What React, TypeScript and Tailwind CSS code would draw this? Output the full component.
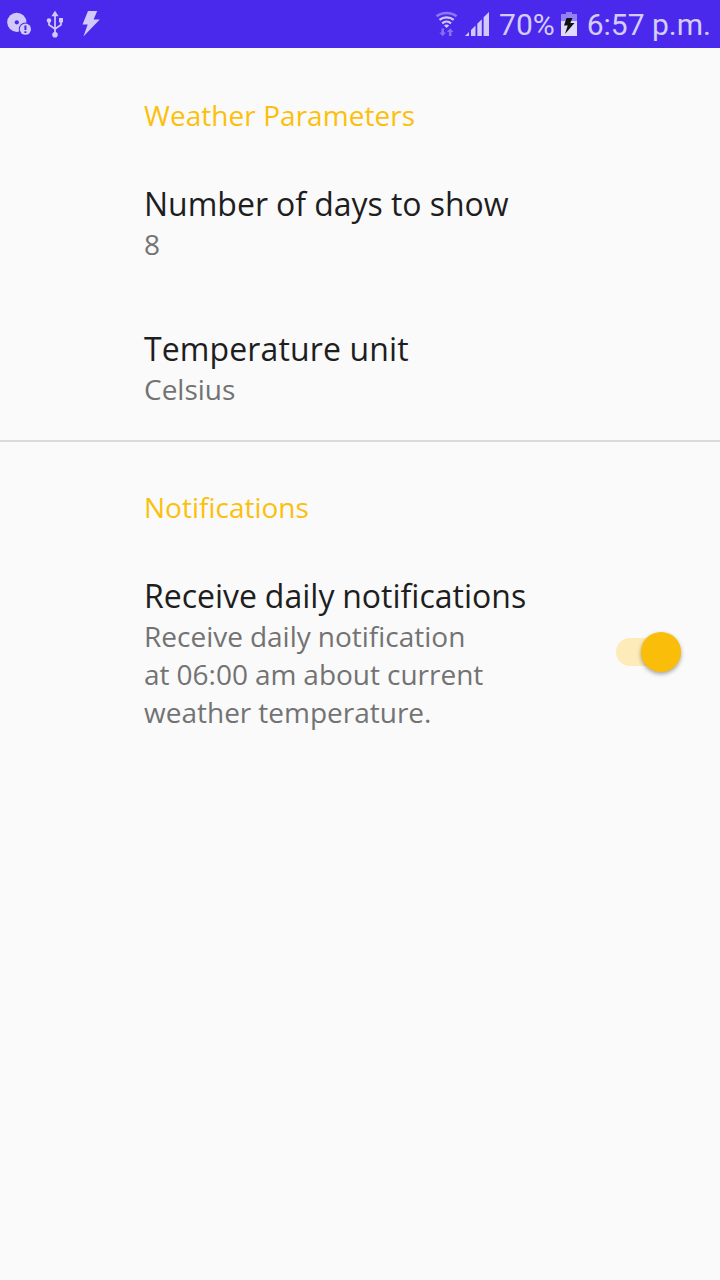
const H = "text-[28px] leading-[38px] text-[#fcc00c]";
const T = "text-[32px] leading-[44px] text-[#1e1e1f]";
const S = "text-[28px] leading-[38px] text-[#737373]";

function NotificationIcons() {
  return (
    <svg className="h-12 w-[110px]" viewBox="0 0 110 48" fill="#d2c9fb">
      <circle cx="16.8" cy="22.3" r="9.6" />
      <circle cx="16.8" cy="22.3" r="2.1" fill="#4a29ed" />
      <circle cx="25.4" cy="29.2" r="6.6" fill="#4a29ed" />
      <circle cx="25.4" cy="29.2" r="5.6" />
      <path d="M24.4 25.4h2v4.6h-2zM24.4 31.2h2v1.9h-2z" fill="#4a29ed" />
      <path d="M55 10.8l3.6 5.4h-7.2z" />
      <path d="M55 15v19M49 20.5v4.2l6 4.3M61 20.5v4.2l-6 4.3" fill="none" stroke="#d2c9fb" strokeWidth="1.7" />
      <circle cx="49" cy="20.5" r="2.3" />
      <path d="M59 18h4v4.4h-4z" />
      <circle cx="55" cy="34.8" r="2.8" />
      <path d="M88 11h9.2l-3.6 8.6h6.2L83.4 36.6l4.3-12.2h-5.2z" />
    </svg>
  );
}

function NetworkIcons() {
  return (
    <svg className="h-12 w-[60px]" viewBox="432 0 60 48" fill="none" stroke="#d2c9fb" strokeWidth="2.2">
      <path d="M436.6 16.3C442 11.9 451.2 11.9 456.6 16.3" strokeWidth="2.5" opacity=".5" />
      <path d="M439.5 19.9C443.4 16.6 449.8 16.6 453.7 19.9M442.2 23.4C444.8 21.1 448.4 21.1 451 23.4" />
      <path d="M444 25.5Q446.6 23.700 449.2 25.5L446.6 28.1z" fill="#d2c9fb" stroke="none" />
      <path d="M441.4 28.5h2.6v4h2l-3.3 3.8-3.3-3.8h2zM448.9 36h2.6v-4h2l-3.3-3.8-3.3 3.8h2z" fill="#8470f3" stroke="none" />
      <path d="M465 36l4-4v4zM471 36v-6l4.5-4.5V36zM477.3 36V23.7l4.5-4.5V36zM483.6 36V17.2l5.4-5.2v24z" fill="#d2c9fb" stroke="none" />
    </svg>
  );
}

function BatteryIcon() {
  return (
    <svg className="h-12 w-4" viewBox="561 0 16 48">
      <path d="M561 14h5v-2h6v2h5v7h-16z" fill="#947ff5" />
      <path d="M561 21h16v15h-16z" fill="#e0dafc" />
      <path d="M566.5 18h6l-2.2 5h4.2l-9.5 11 2.7-8.5H564z" fill="#111" />
    </svg>
  );
}

function Toggle() {
  return (
    <button role="switch" aria-checked="true" aria-label="Receive daily notifications" className="mt-16 mr-[39px] flex h-7 w-[65px] items-center justify-end rounded-full bg-[#fdebb9]">
      <span className="size-10 shrink-0 rounded-full bg-[#fabe0a] shadow-[0_2px_4px_rgba(0,0,0,0.35)]" />
    </button>
  );
}

export default function App() {
  return (
    <div className="flex h-[1280px] w-[720px] flex-col overflow-hidden bg-[#fafafa] font-['Open_Sans',sans-serif]">
      <header className="flex h-12 shrink-0 items-center justify-between bg-[#4a29ed] font-['Roboto',sans-serif] text-[30px] text-[#d4ccfb]">
        <NotificationIcons />
        <div className="flex items-center pr-[9px]">
          <NetworkIcons />
          <span className="ml-[7px] mr-[6px]">70%</span>
          <BatteryIcon />
          <span className="ml-[10px]">6:57 p.m.</span>
        </div>
      </header>
      <main className="flex flex-col">
        <section className="flex h-[394px] flex-col border-b-2 border-[#dadada] pl-36">
          <h2 className={`${H} mt-[48px] tracking-[0.05px]`}>Weather Parameters</h2>
          <div className="mt-[48px]"><div className={`${T} [word-spacing:-0.2px]`}>Number of days to show</div><div className={`${S} -mt-px`}>8</div></div>
          <div className="mt-16"><div className={`${T} tracking-[0.12px]`}>Temperature unit</div><div className={`${S} -mt-px`}>Celsius</div></div>
        </section>
        <section>
          <h2 className={`${H} mt-[46px] pl-36`}>Notifications</h2>
          <div className="mt-[48px] flex justify-between pl-36">
            <div><div className={`${T} [word-spacing:-0.5px]`}>Receive daily notifications</div><div className={`${S} -mt-px [word-spacing:-0.3px]`}>Receive daily notification<br />at 06:00 am about current<br />weather temperature.</div></div>
            <Toggle />
          </div>
        </section>
      </main>
    </div>
  );
}
